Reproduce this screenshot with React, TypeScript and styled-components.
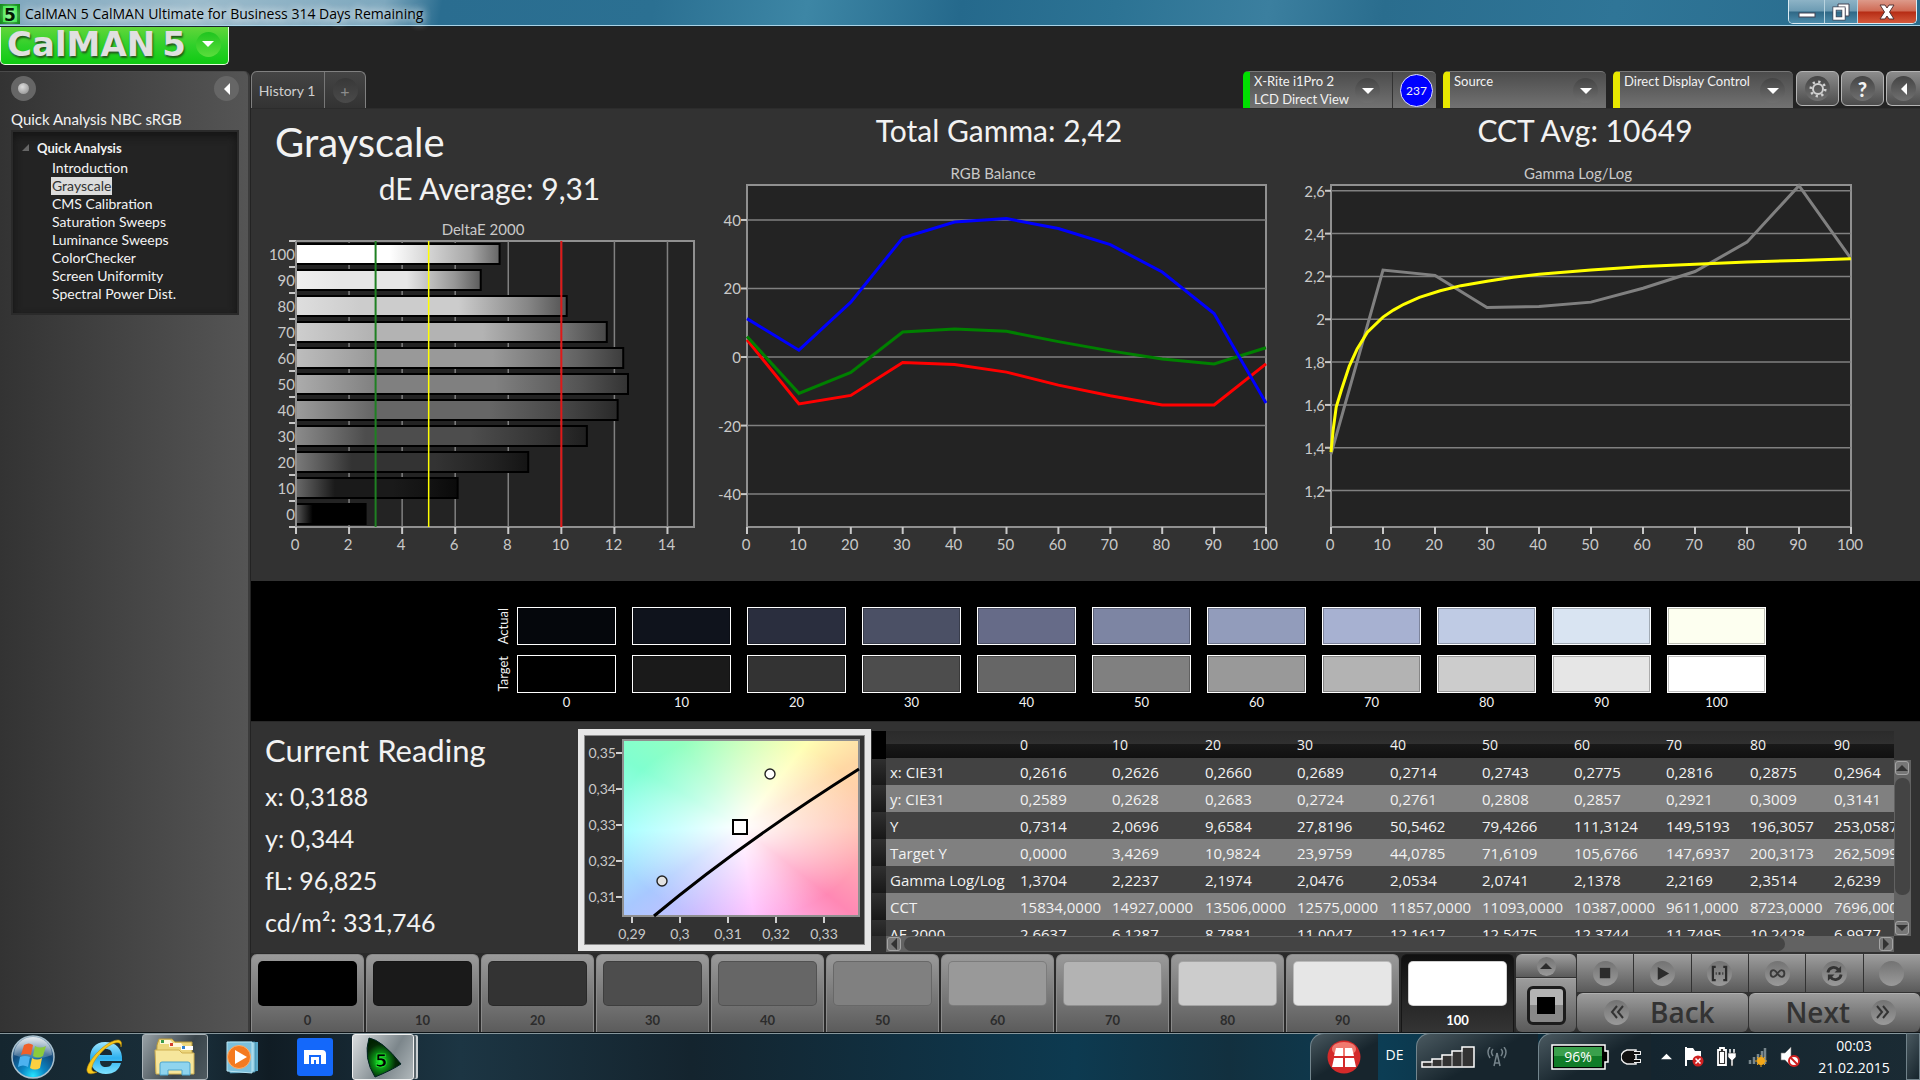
import React from "react";
import styled, { createGlobalStyle, css } from "styled-components";

const UI = `Lato, "Liberation Sans", sans-serif`;
const SEGOE = `"Open Sans", "Noto Sans", sans-serif`;

const GlobalStyle = createGlobalStyle`
  *, *::before, *::after { box-sizing: border-box; }
  body { margin: 0; background: #232323; font-family: ${UI}; color: #f2f2f2; }
  button { font: inherit; color: inherit; border: 0; padding: 0; margin: 0; background: none; cursor: pointer; }
  h1, h2, h3, p, ul { margin: 0; padding: 0; font-weight: 400; }
  svg { display: block; flex: none; }
`;

const Page = styled.div`
  min-height: 100vh;
  display: flex;
  flex-direction: column;
  overflow: hidden;
`;

/* ---------- window title bar ---------- */

const TitleBar = styled.header`
  display: flex;
  justify-content: space-between;
  align-items: flex-start;
  height: 27px;
  flex: none;
  border-bottom: 1px solid #16232b;
  box-shadow: inset 0 -1px 0 #a9d3e6;
  background: linear-gradient(100deg, #7fa6bd 0, #9dbccc 10%, #7ea8be 20%, #2a6d90 23%, #2b7092 34%, #3d86a5 42%, #25698c 50%, #2c7394 58%, #3b7f9f 66%, #2a6d8e 72%, #2f7597 84%, #286b8c 100%);
`;

const TitleText = styled.div`
  display: flex;
  align-items: center;
  gap: 5px;
  height: 27px;
  font: 14px/20px ${SEGOE};
  color: #000;
  white-space: nowrap;
  text-shadow: 0 0 8px #fff, 0 0 10px #ffffffaa;
`;

const WindowControls = styled.div`
  display: flex;
  height: 24px;
  margin-right: 3px;
  border: 1px solid #dcebf2;
  border-top: 0;
  border-radius: 0 0 5px 5px;
  overflow: hidden;
`;

const WindowButton = styled.button<{ $width: number; $close?: boolean }>`
  width: ${(p) => p.$width}px;
  display: grid;
  place-items: center;
  border-right: 1px solid #b8d3df;
  background: linear-gradient(#8db3c6, #6c9bb3 48%, #2f6886 52%, #4c8cab);
  &:last-child { border-right: 0; }
  ${(p) => p.$close && css`background: linear-gradient(#dd9a8a, #cf6a54 48%, #b62c14 52%, #d4593c);`}
`;

/* ---------- application shell ---------- */

const Brand = styled.div`
  height: 44px;
  flex: none;
  display: flex;
  align-items: flex-start;
`;

const BrandButton = styled.button`
  display: flex;
  align-items: center;
  gap: 10px;
  height: 38px;
  width: 229px;
  padding: 0 0 3px 6px;
  border: 1px solid #e8ffe0;
  border-top: 0;
  border-radius: 0 0 5px 5px;
  background: linear-gradient(#62d63a, #2fd02a 50%, #0fcb12);
`;

const BrandName = styled.span`
  display: flex;
  gap: 7px;
  font: bold 34px/32px "DejaVu Sans", sans-serif;
  color: #e0e0e0;
  text-shadow: 1px 2px 2px #1c5a14, 0 1px 0 #999;
`;

const Round = styled.span<{ $size?: number; $tone?: string }>`
  display: grid;
  place-items: center;
  flex: none;
  width: ${(p) => p.$size ?? 25}px;
  height: ${(p) => p.$size ?? 25}px;
  border-radius: 50%;
  background: ${(p) => p.$tone ?? "linear-gradient(#444, #707070)"};
`;

const Body = styled.div`
  flex: 1;
  display: flex;
  min-height: 0;
`;

const Sidebar = styled.aside`
  width: 250px;
  flex: none;
  padding: 4px 9px 4px 11px;
  border-top: 1px solid #4a4a4a;
  border-right: 2px solid #3c3c3c;
  border-radius: 0 6px 0 0;
  background: linear-gradient(90deg, #333, #555);
`;

const SidebarTools = styled.div`
  display: flex;
  justify-content: space-between;
  height: 25px;
`;

const WorkflowName = styled.h2`
  margin-top: 7px;
  font-size: 15px;
  line-height: 22px;
`;

const Tree = styled.nav`
  padding: 6px 9px 6px;
  height: 185px;
  border: 2px solid #2a2a2a;
  background: #232323;
  box-shadow: inset 0 4px 8px #141414;
  font-size: 14px;
`;

const TreeRoot = styled.div`
  display: flex;
  align-items: center;
  gap: 8px;
  height: 19px;
  font-size: 13px;
  font-weight: 700;
`;

const TreeList = styled.ul`
  list-style: none;
  padding: 2px 0 0 29px;
`;

const TreeItem = styled.li`
  height: 18px;
  line-height: 18px;
`;

const TreeLink = styled.a<{ $active?: boolean }>`
  display: inline-block;
  padding: 0 1px;
  color: ${(p) => (p.$active ? "#333" : "#f4f4f4")};
  background: ${(p) => (p.$active ? "#dcdcdc" : "transparent")};
  text-decoration: none;
`;

const Main = styled.main`
  flex: 1;
  min-width: 0;
  display: flex;
  flex-direction: column;
  padding-left: 1px;
`;

const TopRow = styled.div`
  display: flex;
  justify-content: space-between;
  height: 37px;
`;

const Tabs = styled.div`
  display: flex;
  border: 1px solid #808080;
  border-bottom: 0;
  border-radius: 6px 6px 0 0;
  background: linear-gradient(#454545, #333);
`;

const Tab = styled.button`
  width: 73px;
  padding-right: 2px;
  border-right: 1px solid #777;
  font-size: 14px;
  color: #cfcfcf;
`;

const AddTab = styled.button`
  width: 40px;
  display: grid;
  place-items: center;
  font-size: 16px;
  color: #8c8c8c;
`;

const Devices = styled.div`
  display: flex;
  gap: 7px;
`;

const Device = styled.div<{ $width: number; $accent: string }>`
  display: flex;
  width: ${(p) => p.$width}px;
  border-left: 7px solid ${(p) => p.$accent};
  border-top: 1px solid #777;
  border-radius: 5px 5px 0 0;
  background: linear-gradient(#4c4c4c, #727272);
`;

const DeviceButton = styled.button<{ $meter?: boolean }>`
  flex: 1;
  display: flex;
  justify-content: space-between;
  align-items: flex-start;
  padding: 0 ${(p) => (p.$meter ? 12 : 8)}px 0 4px;
  font-size: 13px;
  line-height: 18px;
  text-align: left;
  white-space: nowrap;
  ${Round} { margin-top: 6px; }
`;

const Badge = styled.div`
  width: 44px;
  display: grid;
  place-items: center;
  border-left: 1px solid #333;
  padding-left: 4px;
  span {
    display: grid;
    place-items: center;
    width: 33px;
    height: 33px;
    border: 1px solid #dfe0ff;
    border-radius: 50%;
    background: #0000ff;
    font-size: 12px;
  }
`;

const ToolGroup = styled.div`
  display: flex;
  gap: 2px;
  margin-left: -4px;
`;

const ToolButton = styled.button<{ $edge?: boolean }>`
  width: ${(p) => (p.$edge ? 34 : 43)}px;
  height: 35px;
  display: grid;
  place-items: center;
  border: 1px solid #b4b4b4;
  border-right-width: ${(p) => (p.$edge ? 0 : 1)}px;
  border-radius: ${(p) => (p.$edge ? "6px 0 0 6px" : "6px")};
  background: linear-gradient(#8c8c8c, #4c4c4c);
  font-size: 20px;
  font-weight: 900;
`;

/* ---------- charts ---------- */

const Charts = styled.section`
  flex: 1;
  display: grid;
  grid-template-columns: 453fr 558fr 582fr;
  column-gap: 16px;
  align-items: start;
  padding: 3px 44px 0 0;
  border-top: 1px solid #2c2c2c;
  background: #323232;
`;

const ChartColumn = styled.div`
  min-width: 0;
`;

const PageTitle = styled.h1`
  padding: 6px 0 0 24px;
  font-size: 40px;
  line-height: 48px;
`;

const Stat = styled.h2<{ $indent?: boolean }>`
  text-align: center;
  font-size: 30px;
  line-height: ${(p) => (p.$indent ? 44 : 36)}px;
  padding-left: ${(p) => (p.$indent ? 24 : 0)}px;
  margin-bottom: ${(p) => (p.$indent ? 5 : 12)}px;
`;

const ChartSvg = styled.svg`
  width: 100%;
  height: auto;
  overflow: visible;
  font: 15px ${UI};
  text { fill: #c9c9c9; }
  .grid { stroke: #808080; stroke-width: 1.5; }
  .tick { stroke: #c8c8c8; stroke-width: 2; }
`;

const grays = ["#000000", "#1a1a1a", "#333333", "#4d4d4d", "#666666", "#808080", "#999999", "#b3b3b3", "#cccccc", "#e6e6e6", "#ffffff"];
const levels = [0, 10, 20, 30, 40, 50, 60, 70, 80, 90, 100];
const deltaE = [2.66, 6.13, 8.79, 11.0, 12.16, 12.55, 12.37, 11.75, 10.24, 7.0, 7.71];

function DeltaChart() {
  const left = 45, right = 443, top = 26, bottom = 312, step = 26;
  const x = (v: number) => left + (v * (right - left)) / 15;
  return (
    <ChartSvg viewBox="0 0 453 345" role="img" aria-label="DeltaE 2000">
      <defs>
        {grays.map((_, i) => {
          const c = Math.round(i * 25.5);
          const light = Math.round(c + (255 - c) * 0.35);
          const dark = Math.round(c * 0.4);
          const g = (n: number) => `rgb(${n},${n},${n})`;
          return (
            <linearGradient id={`bar${i}`} key={i}>
              <stop offset="0" stopColor={g(light)} />
              <stop offset="0.24" stopColor={g(c)} />
              <stop offset={i === 10 ? 0.46 : 0.6} stopColor={g(c)} />
              <stop offset="0.86" stopColor={g(Math.round(c * 0.65))} />
              <stop offset="1" stopColor={g(dark)} />
            </linearGradient>
          );
        })}
      </defs>
      <text x="232" y="20" textAnchor="middle">DeltaE 2000</text>
      <rect x={left} y={top} width={right - left} height={bottom - top} fill="#232323" stroke="#909090" strokeWidth="2" />
      {[2, 4, 6, 8, 10, 12, 14].map((v) => <line key={v} className="grid" x1={x(v)} x2={x(v)} y1={top} y2={bottom} />)}
      {[0, 2, 4, 6, 8, 10, 12, 14].map((v) => (
        <g key={v}>
          <line className="tick" x1={x(v)} x2={x(v)} y1={bottom} y2={bottom + 7} />
          <text x={x(v) - 1} y="335" textAnchor="middle">{v}</text>
        </g>
      ))}
      {levels.map((l, i) => {
        const y = top + (10 - i) * step;
        return (
          <g key={l}>
            <line className="tick" x1={left - 7} x2={left} y1={y} y2={y} />
            <text x={left - 1} y={y + 19} textAnchor="end">{l}</text>
            <rect x={left} y={y + 3} width={x(deltaE[i]) - left - 1} height="20" fill={`url(#bar${i})`} stroke="#000" strokeWidth="2" />
          </g>
        );
      })}
      <line className="tick" x1={left - 7} x2={left} y1={bottom} y2={bottom} />
      <line x1={left} x2={left} y1={top} y2={bottom} stroke="#909090" strokeWidth="2" />
      <line x1={x(3)} x2={x(3)} y1={top} y2={bottom} stroke="#1f8022" strokeWidth="2" />
      <line x1={x(5)} x2={x(5)} y1={top} y2={bottom} stroke="#ffff00" strokeWidth="1.5" />
      <line x1={x(10)} x2={x(10)} y1={top} y2={bottom} stroke="#e01818" strokeWidth="2" />
    </ChartSvg>
  );
}

type Series = { color: string; points: [number, number][] };

function LineChart(p: { width: number; title: string; titleX: number; left: number; right: number; min: number; max: number; ticks: number[]; series: Series[] }) {
  const top = 25, bottom = 367;
  const x = (v: number) => p.left + (v * (p.right - p.left)) / 100;
  const y = (v: number) => bottom - ((v - p.min) * (bottom - top)) / (p.max - p.min);
  return (
    <ChartSvg viewBox={`0 0 ${p.width} 400`} role="img" aria-label={p.title}>
      <text x={p.titleX} y="19" textAnchor="middle">{p.title}</text>
      <rect x={p.left} y={top} width={p.right - p.left} height={bottom - top} fill="#232323" stroke="#909090" strokeWidth="2" />
      {p.ticks.map((t) => (
        <g key={t}>
          <line className="grid" x1={p.left} x2={p.right} y1={y(t)} y2={y(t)} />
          <line className="tick" x1={p.left - 6} x2={p.left} y1={y(t)} y2={y(t)} />
          <text x={p.left - 6} y={y(t) + 6} textAnchor="end">{String(t).replace(".", ",")}</text>
        </g>
      ))}
      {levels.map((l) => (
        <g key={l}>
          <line className="tick" x1={x(l)} x2={x(l)} y1={bottom} y2={bottom + 7} />
          <text x={x(l) - 1} y="390" textAnchor="middle">{l}</text>
        </g>
      ))}
      {p.series.map((s) => (
        <polyline key={s.color} fill="none" stroke={s.color} strokeWidth="3" points={s.points.map(([a, b]) => `${x(a)},${y(b)}`).join(" ")} />
      ))}
    </ChartSvg>
  );
}

const byLevel = (values: number[]): [number, number][] => values.map((v, i) => [i * 10, v]);

const rgbSeries: Series[] = [
  { color: "#ff0000", points: byLevel([5, -13.7, -11.2, -1.6, -2.2, -4.4, -8.2, -11.3, -14, -14, -2]) },
  { color: "#008000", points: byLevel([6, -10.6, -4.5, 7.3, 8.2, 7.5, 4.5, 1.8, -0.6, -2, 2.7]) },
  { color: "#0000ff", points: byLevel([11.2, 2, 16, 34.8, 39.4, 40.4, 37.5, 32.8, 24.8, 12.7, -13.4]) },
];

const gammaSeries: Series[] = [
  { color: "#808080", points: byLevel([1.3704, 2.23, 2.205, 2.055, 2.06, 2.08, 2.145, 2.223, 2.36, 2.624, 2.283]) },
  {
    color: "#ffff00",
    points: [[0, 1.38], [0.4, 1.48], [1, 1.59], [2, 1.67], [3.5, 1.78], [5, 1.86], [7, 1.94], [10, 2.01], [12, 2.043], [14, 2.07], [17, 2.102], [21, 2.133], [25, 2.157], [30, 2.178], [35, 2.196], [40, 2.21], [50, 2.23], [60, 2.246], [70, 2.257], [80, 2.267], [90, 2.275], [100, 2.283]],
  },
];

/* ---------- swatches ---------- */

const SwatchBand = styled.section`
  display: grid;
  grid-template-columns: 258fr repeat(11, 115fr) 146fr;
  grid-template-rows: 38px 38px 20px;
  row-gap: 10px;
  padding: 26px 0 9px;
  height: 141px;
  background: #000;
  border-bottom: 1px solid #282828;
`;

const SwatchHead = styled.div`
  display: grid;
  place-items: center end;
  font-size: 13px;
  span { writing-mode: vertical-rl; transform: rotate(180deg); line-height: 12px; }
`;

const Swatch = styled.div<{ $color: string }>`
  margin: 0 8px 0 8px;
  border: 1px solid #fff;
  box-shadow: inset 0 0 0 1px #00000040;
  background: ${(p) => p.$color};
`;

const SwatchLabel = styled.div`
  margin-top: -11px;
  text-align: center;
  font-size: 13px;
  line-height: 20px;
`;

const actual = ["#05070c", "#0f131c", "#2a2e3e", "#4b5065", "#666b88", "#7d85a3", "#929cbb", "#a7b1d1", "#bfcbe4", "#d9e4f2", "#fdfff0"];

/* ---------- readings ---------- */

const ReadingRow = styled.section`
  display: flex;
  height: 231px;
  padding: 7px 9px 0 14px;
  background: #323232;
`;

const Readings = styled.div`
  width: 313px;
  flex: none;
  h2 { font-size: 31px; line-height: 42px; margin-bottom: 4px; }
  p { font-size: 25px; line-height: 42px; }
`;

const CieFrame = styled.div`
  width: 293px;
  height: 222px;
  flex: none;
  border: 6px solid #e6e6e6;
  outline: 1px solid #8c8c8c;
  outline-offset: -7px;
  padding: 1px;
`;

const CieSvg = styled.svg`
  width: 279px;
  height: 208px;
  font: 14px ${UI};
  text { fill: #c9c9c9; }
  .tick { stroke: #d0d0d0; stroke-width: 2; }
  background:
    radial-gradient(ellipse at 50% 50%, #fff 0%, #ffffff80 35%, #ffffff00 75%) 38px 3px / 236px 176px no-repeat,
    conic-gradient(from 0deg at 50% 50%, #c8ffb8 0deg, #ffffb4 38deg, #ffd8a4 60deg, #ffc4b4 90deg, #ff88b4 128deg, #ffa8e0 150deg, #ffc0ff 172deg, #d0bcff 205deg, #a8c8ff 235deg, #a4ffff 268deg, #80ffd0 300deg, #94ffc0 325deg, #c8ffb8 360deg) 38px 3px / 236px 176px no-repeat,
    #323232;
`;

function CieChart() {
  return (
    <CieSvg viewBox="0 0 279 208" role="img" aria-label="CIE chromaticity">
      <rect x="38" y="4" width="236" height="176" fill="none" stroke="#909090" strokeWidth="2" />
      {["0,35", "0,34", "0,33", "0,32", "0,31"].map((t, i) => (
        <g key={t}>
          <line className="tick" x1="31" x2="37" y1={17 + i * 36} y2={17 + i * 36} />
          <text x="31" y={22 + i * 36} textAnchor="end">{t}</text>
        </g>
      ))}
      {["0,29", "0,3", "0,31", "0,32", "0,33"].map((t, i) => (
        <g key={t}>
          <line className="tick" x1={47 + i * 48} x2={47 + i * 48} y1="181" y2="187" />
          <text x={47 + i * 48} y="203" textAnchor="middle">{t}</text>
        </g>
      ))}
      <path d="M69 180 Q155 108 274 33" fill="none" stroke="#000" strokeWidth="3" />
      <rect x="148" y="84" width="14" height="14" fill="#fff" stroke="#000" strokeWidth="2" />
      <circle cx="185" cy="38" r="5" fill="#fff" stroke="#222" strokeWidth="1.4" />
      <circle cx="77" cy="145" r="5" fill="#e2e2e2" stroke="#222" strokeWidth="1.4" />
    </CieSvg>
  );
}

const DataPanel = styled.div`
  flex: 1;
  min-width: 0;
  display: grid;
  grid-template-columns: 14px minmax(0, 1fr) 17px;
  grid-template-rows: 29px 176px 16px;
  margin-top: 2px;
  margin-left: 1px;
`;

const RowSelectors = styled.div`
  grid-row: 1 / 3;
  background: linear-gradient(#000 0 28px, transparent 28px), repeating-linear-gradient(#303030 0, #181818 27px) 0 27px;
`;

const TableViewport = styled.div`
  grid-column: 2;
  grid-row: 1 / 3;
  overflow: hidden;
`;

const DataTable = styled.table`
  table-layout: fixed;
  width: 1020px;
  border-collapse: collapse;
  font: 15px/20px ${SEGOE};
  white-space: nowrap;
  th, td { padding: 0 0 0 4px; text-align: left; font-weight: 400; height: 27px; }
  thead th { font-size: 14px; padding-top: 1px; }
  thead tr { background: linear-gradient(#2b2b2b 0, #303030 48%, #191919 50%, #101010); }
  tbody tr { background: #424242; }
  tbody tr:nth-child(even) { background: #808080; }
`;

const ScrollTrack = styled.div<{ $vertical?: boolean }>`
  grid-column: ${(p) => (p.$vertical ? 3 : 2)};
  grid-row: ${(p) => (p.$vertical ? 2 : 3)};
  display: flex;
  flex-direction: ${(p) => (p.$vertical ? "column" : "row")};
  gap: 3px;
  padding: 1px;
  background: #626262;
`;

const ScrollArrow = styled.button`
  width: 14px;
  height: 14px;
  flex: none;
  display: grid;
  place-items: center;
  border: 1px solid #a4a4a4;
  border-radius: 3px;
  background: #777;
`;

const ScrollThumb = styled.div<{ $grow: number }>`
  flex: ${(p) => p.$grow};
  border-radius: 7px;
  background: #444;
`;

const ScrollRest = styled.div<{ $grow: number }>`
  flex: ${(p) => p.$grow};
`;

const columnWidths = [130, 92, 93, 92, 93, 92, 92, 92, 84, 84, 76];
const tableRows: [string, string[]][] = [
  ["x: CIE31", ["0,2616", "0,2626", "0,2660", "0,2689", "0,2714", "0,2743", "0,2775", "0,2816", "0,2875", "0,2964"]],
  ["y: CIE31", ["0,2589", "0,2628", "0,2683", "0,2724", "0,2761", "0,2808", "0,2857", "0,2921", "0,3009", "0,3141"]],
  ["Y", ["0,7314", "2,0696", "9,6584", "27,8196", "50,5462", "79,4266", "111,3124", "149,5193", "196,3057", "253,0587"]],
  ["Target Y", ["0,0000", "3,4269", "10,9824", "23,9759", "44,0785", "71,6109", "105,6766", "147,6937", "200,3173", "262,5099"]],
  ["Gamma Log/Log", ["1,3704", "2,2237", "2,1974", "2,0476", "2,0534", "2,0741", "2,1378", "2,2169", "2,3514", "2,6239"]],
  ["CCT", ["15834,0000", "14927,0000", "13506,0000", "12575,0000", "11857,0000", "11093,0000", "10387,0000", "9611,0000", "8723,0000", "7696,0000"]],
  ["ΔE 2000", ["2,6637", "6,1287", "8,7881", "11,0047", "12,1617", "12,5475", "12,3744", "11,7495", "10,2428", "6,9977"]],
];

/* ---------- pattern bar ---------- */

const PatternBar = styled.section`
  display: flex;
  height: 79px;
  background: #323232;
`;

const Patterns = styled.div`
  flex: 1;
  display: grid;
  grid-template-columns: repeat(11, 1fr);
  background: #2a2a2a;
`;

const Pattern = styled.button<{ $selected?: boolean }>`
  display: flex;
  flex-direction: column;
  margin: 1px 2px 0 0;
  padding: 6px;
  border: 1px solid ${(p) => (p.$selected ? "#161616" : "#8a8a8a")};
  border-bottom-color: #4a4a4a;
  border-radius: 6px;
  background: ${(p) => (p.$selected ? "linear-gradient(#101010, #383838)" : "linear-gradient(#9a9a9a, #555)")};
  font-size: 13px;
  font-weight: 700;
  line-height: 28px;
  color: ${(p) => (p.$selected ? "#fff" : "#2c2c2c")};
`;

const PatternColor = styled.span<{ $color: string }>`
  align-self: stretch;
  height: 45px;
  flex: none;
  border-radius: 5px;
  border: 1px solid #00000030;
  background: ${(p) => p.$color};
`;

const PatternLabel = styled.span`
  align-self: center;
`;

const metal = "linear-gradient(#9c9c9c, #5a5a5a)";

const WindowSize = styled.div`
  width: 60px;
  margin-top: 1px;
  display: grid;
  grid-template-rows: 23px 1fr;
  row-gap: 1px;
  border-radius: 6px;
  overflow: hidden;
`;

const MetalButton = styled.button`
  display: grid;
  place-items: center;
  border-top: 1px solid #a8a8a8;
  background: ${metal};
`;

const SizeBox = styled.span`
  display: grid;
  place-items: center;
  width: 39px;
  height: 39px;
  border: 3px solid #1c1c1c;
  border-radius: 6px;
  background: linear-gradient(#b4b4b4 50%, #888 50%);
  &::after { content: ""; width: 18px; height: 17px; background: #000; }
`;

const Transport = styled.div`
  width: 343px;
  margin: 1px 0 0 1px;
  display: grid;
  grid-template-columns: repeat(6, 1fr);
  grid-template-rows: 38px 39px;
  gap: 1px;
`;

const NavButton = styled.button<{ $forward?: boolean }>`
  grid-column: span 3;
  display: flex;
  align-items: center;
  justify-content: ${(p) => (p.$forward ? "flex-end" : "flex-start")};
  gap: 21px;
  padding: 0 ${(p) => (p.$forward ? 24 : 27)}px 2px;
  border-top: 1px solid #b0b0b0;
  border-radius: 6px;
  background: ${metal};
  font: 600 28px/36px ${SEGOE};
  color: #333;
`;

const knob = "linear-gradient(#737373, #9a9a9a)";

/* ---------- taskbar ---------- */

const Taskbar = styled.footer`
  display: flex;
  justify-content: space-between;
  flex: none;
  height: 48px;
  border-top: 1px solid #0d1316;
  box-shadow: inset 0 1px 0 #87979d;
  background: linear-gradient(90deg, #15262f 0, #1a2f3b 10%, #101c24 14%, #1c3543 24%, #14242e 36%, #0f3346 50%, #0d3a50 56%, #12303f 64%, #0c3d54 72%, #0b2c3c 80%, #14252f 86%, #1b2b34 100%);
  font: 14px/22px ${SEGOE};
  color: #fff;
`;

const TaskGroup = styled.div`
  display: flex;
  align-items: center;
`;

const TaskButton = styled.button<{ $width: number; $state?: "open" | "active" }>`
  width: ${(p) => p.$width}px;
  height: 46px;
  display: grid;
  place-items: center;
  border: 1px solid transparent;
  border-radius: 3px;
  ${(p) => p.$state === "open" && css`border-color: #aab3b8; background: linear-gradient(120deg, #98a1a6, #39444a 60%, #4e5a60);`}
  ${(p) => p.$state === "active" && css`border-color: #f0f0f0; background: linear-gradient(120deg, #d8dcde, #7c868b 60%, #b0b8bb); box-shadow: 3px 0 0 -1px #5a666c, 5px 0 0 -1px #c8ced1;`}
`;

const TrayGroup = styled.div<{ $width: number; $pad: number }>`
  width: ${(p) => p.$width}px;
  height: 47px;
  display: flex;
  align-items: center;
  gap: 12px;
  padding-left: ${(p) => p.$pad}px;
  border-left: 1px solid #73858d;
  border-top: 1px solid #73858d;
  border-radius: 14px 0 0 0;
  background: linear-gradient(150deg, #4a5960, #17252d 55%);
`;

const Language = styled.button`
  width: 38px;
  padding: 0 5px 4px 0;
`;

const TrayIcons = styled.div`
  display: flex;
  align-items: center;
  gap: 12px;
  padding: 0 2px 0 10px;
`;

const Clock = styled.time`
  width: 104px;
  text-align: center;
`;

const ShowDesktop = styled.button`
  width: 14px;
  height: 47px;
  border: 1px solid #71828a;
  background: linear-gradient(120deg, #4a5960, #16242c);
`;

function Arrow({ dir, size = 12, color = "#fff" }: { dir: "up" | "down" | "left" | "right"; size?: number; color?: string }) {
  const d = { up: "M0 9L6 3L12 9Z", down: "M0 3L6 9L12 3Z", left: "M9 0L3 6L9 12Z", right: "M3 0L9 6L3 12Z" }[dir];
  return <svg width={size} height={size} viewBox="0 0 12 12"><path d={d} fill={color} /></svg>;
}

function StartOrb() {
  return (
    <svg width="44" height="44" viewBox="0 0 44 44">
      <defs>
        <radialGradient id="orb" cx=".5" cy=".95" r=".95"><stop offset="0" stopColor="#25e4ff" /><stop offset=".3" stopColor="#0a86c4" /><stop offset=".65" stopColor="#124a7c" /><stop offset="1" stopColor="#7e9cb4" /></radialGradient>
        <linearGradient id="gloss" x2="0" y2="1"><stop offset="0" stopColor="#fff" stopOpacity=".8" /><stop offset="1" stopColor="#fff" stopOpacity=".15" /></linearGradient>
      </defs>
      <circle cx="22" cy="22" r="21" fill="url(#orb)" stroke="#a8c0ce" strokeWidth="1.5" />
      <path d="M3 20a19 18 0 0 1 38 0q-18 7-38 0z" fill="url(#gloss)" />
      <path d="M13 10q5-3 9 0l-2 10q-5-2-10 0z" fill="#f0602a" />
      <path d="M24 11q5 3 11 0l-3 10q-5 3-10 0z" fill="#8ccb3c" />
      <path d="M9 22q5-2 10 0l-2 10q-5-3-10 0z" fill="#4cb2f0" />
      <path d="M21 23q5 3 10 0l-2 10q-5 3-10 0z" fill="#fcd040" />
    </svg>
  );
}

function ExplorerE() {
  return (
    <svg width="38" height="38" viewBox="0 0 38 38">
      <defs><linearGradient id="ie" x2="0" y2="1"><stop offset="0" stopColor="#9fe6ff" /><stop offset=".5" stopColor="#2cb0ee" /><stop offset="1" stopColor="#7fe2ff" /></linearGradient></defs>
      <path d="M20 4C10 4 5 11 5 20s6 16 16 16c8 0 13-4 15-11h-9c-1 3-3 4-6 4-4 0-6-2-6-6h22C38 11 31 4 20 4zm-5 13c0-4 2-6 6-6s6 2 6 6z" fill="url(#ie)" />
      <path d="M36 9C38 2 34 0 26 4 14 10 1 26 2 33c1 4 6 3 10 1-4 0-6-1-5-5C9 20 22 7 30 5c4-1 6 0 6 4z" fill="#f8c81c" stroke="#b88a08" strokeWidth=".6" />
    </svg>
  );
}

function FolderIcon() {
  return (
    <svg width="42" height="40" viewBox="0 0 42 40">
      <path d="M3 8l2-6h13l3 3h17v30H2z" fill="#ecd67c" stroke="#b89a3c" />
      <path d="M6 3h10l4 4H6zM15 6h12l3 4H15z" fill="#fff7d8" />
      <rect x="7" y="3" width="3" height="3" fill="#3a9c4a" /><rect x="16" y="6" width="3" height="3" fill="#d4402c" />
      <rect x="27" y="9" width="12" height="4" fill="#fff" /><rect x="28" y="9" width="3" height="3" fill="#3080d0" />
      <path d="M1 13h24l3 3h12v21H2z" fill="#f6e69c" stroke="#d0b050" />
      <path d="M6 38V27q0-2 2-2h26q2 0 2 2v11h-8v-5H14v5z" fill="#8fd4ee" stroke="#4da4cc" />
    </svg>
  );
}

function PlayerIcon() {
  return (
    <svg width="36" height="34" viewBox="0 0 36 34">
      <path d="M8 2h25v29l-25 2z" fill="#5aa8c8" /><path d="M5 2h25v30l-25 1z" fill="#9cd4e8" stroke="#3a88a8" strokeWidth=".8" />
      <path d="M2 2h25v31L2 31z" fill="#7cc0dc" stroke="#b8e4f2" />
      <circle cx="14" cy="17" r="11.500" fill="#f47a20" stroke="#fbb070" /><path d="M10 10l12 7-12 7z" fill="#fff" />
    </svg>
  );
}

function MaxthonIcon() {
  return (
    <svg width="36" height="38" viewBox="0 0 36 38">
      <rect width="36" height="38" rx="3" fill="#1468fa" />
      <path d="M7 12h18q4 0 4 4v10h-5v-9H12v9H7z" fill="#fff" />
      <path d="M14 19h8v7h-3v-4h-2v4h-3z" fill="#fff" />
    </svg>
  );
}

function CalmanIcon() {
  return (
    <svg width="38" height="42" viewBox="0 0 38 42">
      <defs><radialGradient id="cal" cx=".4" cy=".6" r=".55"><stop offset="0" stopColor="#20ff30" /><stop offset=".4" stopColor="#0a8a14" /><stop offset=".8" stopColor="#042a06" /><stop offset="1" stopColor="#020" /></radialGradient></defs>
      <path d="M5 2Q18 4 37 28Q28 34 11 41Q-1 22 5 2z" fill="url(#cal)" stroke="#022" />
      <text x="11" y="31" fontFamily="DejaVu Sans" fontWeight="bold" fontSize="18" stroke="#2cff3c" strokeWidth=".6" fill="#000">5</text>
    </svg>
  );
}

function DoubleChevron({ right }: { right?: boolean }) {
  return (
    <svg width="14" height="14" viewBox="0 0 14 14" fill="none" stroke="#333" strokeWidth="2">
      <path d={right ? "M1 1l5 6-5 6M7 1l5 6-5 6" : "M7 1L2 7l5 6M13 1L8 7l5 6"} />
    </svg>
  );
}

const transportIcons: [string, React.ReactNode][] = [
  ["Stop", <rect x="3" y="3" width="11" height="11" fill="#2c2c2c" />],
  ["Play", <path d="M4 2l12 7-12 7z" fill="#2c2c2c" />],
  ["Read range", <path d="M5 2H2v14h3M13 2h3v14h-3M5 9h1M8 9h2M12 9h1" fill="none" stroke="#2c2c2c" strokeWidth="2.400" />],
  ["Continuous", <path d="M9 9C7 6 6 5 4 5.500 1 6 1 12 4 12.500 6 13 7 12 9 9s3-4 5-3.500c3 .5 3 6.500 0 7C12 13 11 12 9 9z" fill="none" stroke="#3a3a3a" strokeWidth="2" />],
  ["Refresh", <><path d="M2 8C3 2 10 1 13 5M16 10c-1 6-8 7-11 3" fill="none" stroke="#333" strokeWidth="3" /><path d="M16 1v7H9zM2 17v-7h7z" fill="#333" /></>],
  ["Blank", null],
];

export default function App() {
  return (
    <Page>
      <GlobalStyle />
      <TitleBar>
        <TitleText>
          <svg width="20" height="20" viewBox="0 0 20 20">
            <rect width="20" height="20" fill="#0a8a12" /><rect x="3" y="2" width="14" height="16" fill="#20e830" />
            <text x="4" y="17" fontFamily="DejaVu Sans" fontWeight="bold" fontSize="17" fill="#021a04">5</text>
          </svg>
          CalMAN 5 CalMAN Ultimate for Business 314 Days Remaining
        </TitleText>
        <WindowControls>
          <WindowButton $width={36} aria-label="Minimize"><svg width="18" height="16"><rect x="1" y="9" width="16" height="4" fill="#fff" stroke="#445" /></svg></WindowButton>
          <WindowButton $width={33} aria-label="Restore">
            <svg width="18" height="18" fill="none"><path d="M6 1h11v12h-4V5H6z" fill="#fff" stroke="#445" /><rect x="2.500" y="5.500" width="9" height="10" stroke="#445" strokeWidth="4" /><rect x="2.500" y="5.500" width="9" height="10" stroke="#fff" strokeWidth="2.500" /></svg>
          </WindowButton>
          <WindowButton $width={58} $close aria-label="Close">
            <svg width="18" height="16" viewBox="0 0 18 16"><path d="M2 1h5l2 3 2-3h5l-4.500 7 4.500 7h-5l-2-3-2 3H2l4.500-7z" fill="#fff" stroke="#533" /></svg>
          </WindowButton>
        </WindowControls>
      </TitleBar>

      <Brand>
        <BrandButton aria-label="CalMAN menu">
          <BrandName><span>CalMAN</span><span>5</span></BrandName>
          <Round $tone="linear-gradient(#1fc41f, #5ade3c)"><Arrow dir="down" /></Round>
        </BrandButton>
      </Brand>

      <Body>
        <Sidebar>
          <SidebarTools>
            <button aria-label="Record"><Round $tone="#666"><Round $size={11} $tone="radial-gradient(circle at 40% 35%, #ddd, #888)" /></Round></button>
            <button aria-label="Collapse panel"><Round $tone="#666"><Arrow dir="left" /></Round></button>
          </SidebarTools>
          <WorkflowName>Quick Analysis NBC sRGB</WorkflowName>
          <Tree aria-label="Workflow">
            <TreeRoot>
              <svg width="7" height="7"><path d="M7 0v7H0z" fill="#666" /></svg>
              Quick Analysis
            </TreeRoot>
            <TreeList>
              {["Introduction", "Grayscale", "CMS Calibration", "Saturation Sweeps", "Luminance Sweeps", "ColorChecker", "Screen Uniformity", "Spectral Power Dist."].map((t) => (
                <TreeItem key={t}><TreeLink href="#" $active={t === "Grayscale"}>{t}</TreeLink></TreeItem>
              ))}
            </TreeList>
          </Tree>
        </Sidebar>

        <Main>
          <TopRow>
            <Tabs>
              <Tab>History 1</Tab>
              <AddTab aria-label="Add history"><Round $tone="linear-gradient(#383838, #4a4a4a)">+</Round></AddTab>
            </Tabs>
            <Devices>
              <Device $width={193} $accent="#00e000">
                <DeviceButton $meter>
                  <span>X-Rite i1Pro 2<br />LCD Direct View</span>
                  <Round><Arrow dir="down" /></Round>
                </DeviceButton>
                <Badge><span>237</span></Badge>
              </Device>
              <Device $width={163} $accent="#e8e800">
                <DeviceButton>Source<Round><Arrow dir="down" /></Round></DeviceButton>
              </Device>
              <Device $width={180} $accent="#e8e800">
                <DeviceButton>Direct Display Control<Round><Arrow dir="down" /></Round></DeviceButton>
              </Device>
              <ToolGroup>
                <ToolButton aria-label="Settings">
                  <Round>
                    <svg width="18" height="18" viewBox="0 0 18 18" fill="none" stroke="#d0d0d0">
                      <circle cx="9" cy="9" r="5" strokeWidth="2" /><circle cx="9" cy="9" r="7.300" strokeWidth="2.500" strokeDasharray="2.300 3.430" />
                    </svg>
                  </Round>
                </ToolButton>
                <ToolButton aria-label="Help"><Round>?</Round></ToolButton>
                <ToolButton $edge aria-label="Collapse"><Round><Arrow dir="left" /></Round></ToolButton>
              </ToolGroup>
            </Devices>
          </TopRow>

          <Charts>
            <ChartColumn>
              <PageTitle>Grayscale</PageTitle>
              <Stat $indent>dE Average: 9,31</Stat>
              <DeltaChart />
            </ChartColumn>
            <ChartColumn>
              <Stat>Total Gamma: 2,42</Stat>
              <LineChart width={558} title="RGB Balance" titleX={273} left={27} right={546} min={-49.6} max={50.2} ticks={[-40, -20, 0, 20, 40]} series={rgbSeries} />
            </ChartColumn>
            <ChartColumn>
              <Stat>CCT Avg: 10649</Stat>
              <LineChart width={582} title="Gamma Log/Log" titleX={284} left={37} right={557} min={1.03} max={2.627} ticks={[1.2, 1.4, 1.6, 1.8, 2, 2.2, 2.4, 2.6]} series={gammaSeries} />
            </ChartColumn>
          </Charts>

          <SwatchBand>
            <SwatchHead><span>Actual</span></SwatchHead>
            {actual.map((c) => <Swatch key={c} $color={c} />)}
            <div />
            <SwatchHead><span>Target</span></SwatchHead>
            {grays.map((c) => <Swatch key={c} $color={c} />)}
            <div />
            <div />
            {levels.map((l) => <SwatchLabel key={l}>{l}</SwatchLabel>)}
          </SwatchBand>

          <ReadingRow>
            <Readings>
              <h2>Current Reading</h2>
              <p>x: 0,3188</p>
              <p>y: 0,344</p>
              <p>fL: 96,825</p>
              <p>cd/m²: 331,746</p>
            </Readings>
            <CieFrame><CieChart /></CieFrame>
            <DataPanel>
              <RowSelectors />
              <TableViewport>
                <DataTable>
                  <colgroup>{columnWidths.map((w, i) => <col key={i} width={w} />)}</colgroup>
                  <thead>
                    <tr><th aria-label="Measure" />{levels.slice(0, 10).map((l) => <th key={l} scope="col">{l}</th>)}</tr>
                  </thead>
                  <tbody>
                    {tableRows.map(([name, cells]) => (
                      <tr key={name}><th scope="row">{name}</th>{cells.map((c, i) => <td key={i}>{c}</td>)}</tr>
                    ))}
                  </tbody>
                </DataTable>
              </TableViewport>
              <ScrollTrack $vertical>
                <ScrollArrow aria-label="Scroll up"><Arrow dir="up" color="#333" /></ScrollArrow>
                <ScrollThumb $grow={120} />
                <ScrollRest $grow={20} />
                <ScrollArrow aria-label="Scroll down"><Arrow dir="down" color="#333" /></ScrollArrow>
              </ScrollTrack>
              <ScrollTrack>
                <ScrollArrow aria-label="Scroll left"><Arrow dir="left" color="#333" /></ScrollArrow>
                <ScrollThumb $grow={886} />
                <ScrollRest $grow={88} />
                <ScrollArrow aria-label="Scroll right"><Arrow dir="right" color="#333" /></ScrollArrow>
              </ScrollTrack>
            </DataPanel>
          </ReadingRow>

          <PatternBar>
            <Patterns>
              {levels.map((l, i) => (
                <Pattern key={l} $selected={l === 100}>
                  <PatternColor $color={grays[i]} />
                  <PatternLabel>{l}</PatternLabel>
                </Pattern>
              ))}
            </Patterns>
            <WindowSize>
              <MetalButton aria-label="Expand"><Round $size={19} $tone={knob}><Arrow dir="up" color="#2c2c2c" /></Round></MetalButton>
              <MetalButton aria-label="Window size"><SizeBox /></MetalButton>
            </WindowSize>
            <Transport>
              {transportIcons.map(([name, icon]) => (
                <MetalButton key={name} aria-label={name}>
                  <Round $tone={knob}><svg width="17" height="17" viewBox="0 0 18 18">{icon}</svg></Round>
                </MetalButton>
              ))}
              <NavButton><Round $tone={knob}><DoubleChevron /></Round>Back</NavButton>
              <NavButton $forward>Next<Round $tone={knob}><DoubleChevron right /></Round></NavButton>
            </Transport>
          </PatternBar>
        </Main>
      </Body>

      <Taskbar>
        <TaskGroup>
          <TaskButton $width={66} aria-label="Start"><StartOrb /></TaskButton>
          <TaskButton $width={76} aria-label="Internet Explorer"><ExplorerE /></TaskButton>
          <TaskButton $width={66} $state="open" aria-label="Explorer"><FolderIcon /></TaskButton>
          <TaskButton $width={70} aria-label="Media Player"><PlayerIcon /></TaskButton>
          <TaskButton $width={74} aria-label="Maxthon"><MaxthonIcon /></TaskButton>
          <TaskButton $width={62} $state="active" aria-label="CalMAN"><CalmanIcon /></TaskButton>
        </TaskGroup>
        <TaskGroup>
          <TrayGroup $width={68} $pad={16}>
            <svg width="34" height="34" viewBox="0 0 34 34">
              <circle cx="17" cy="17" r="16.500" fill="#d42a2a" /><ellipse cx="17" cy="9" rx="12" ry="7" fill="#f07a70" />
              <path d="M9 8h7v8H7zM18 8h7l2 8h-9zM7 18h9v9H5zM18 18h9l2 9H18z" fill="#fff" />
            </svg>
          </TrayGroup>
          <Language>DE</Language>
          <TrayGroup $width={122} $pad={4}>
            <svg width="54" height="22" viewBox="0 0 54 22"><path d="M1 21v-5h10v-3h10v-4h10V5h10V1h12v20z" fill="#333" stroke="#fff" strokeWidth="1.500" /><path d="M11 16v5M21 13v8M31 9v12M41 5v16" stroke="#ddd" /></svg>
            <svg width="20" height="20" viewBox="0 0 20 20" fill="none" stroke="#75838a" strokeWidth="1.500"><path d="M10 6l-3 13M10 6l3 13M8 16h4M6 2q-3 3 0 7M14 2q3 3 0 7M3 0q-4 5 0 11M17 0q4 5 0 11" /></svg>
          </TrayGroup>
          <TrayGroup $width={113} $pad={12}>
            <svg width="58" height="28" viewBox="0 0 58 26">
              <path d="M1 1h53v6h3v11h-3v7H1z" fill="#000" stroke="#fff" strokeWidth="1.500" /><rect x="3" y="3" width="48" height="20" fill="#107c28" /><rect x="3" y="3" width="48" height="9" fill="#3aa04c" />
              <text x="27" y="18" textAnchor="middle" fontFamily="Open Sans" fontSize="14" fill="#fff">96%</text>
            </svg>
            <svg width="21" height="16" viewBox="0 0 21 16"><path d="M6 1h9v14H6q-6-2-6-7t6-7z" fill="#111" stroke="#eee" strokeWidth="1.500" /><path d="M13 4h7M13 12h7" stroke="#eee" strokeWidth="4" /><path d="M13 4h6M13 12h6" stroke="#111" strokeWidth="2" /></svg>
          </TrayGroup>
          <TrayIcons>
            <Arrow dir="up" size={11} />
            <svg width="20" height="20" viewBox="0 0 20 20"><path d="M2 0v19" stroke="#fff" strokeWidth="2" /><path d="M3 1h6l2 3h6v9H3z" fill="#fff" /><circle cx="14" cy="14" r="5.500" fill="#d02020" /><path d="M11.500 11.500l5 5M16.500 11.500l-5 5" stroke="#fff" strokeWidth="1.500" /></svg>
            <svg width="20" height="20" viewBox="0 0 20 20"><path d="M2 3h2V1h4v2h2v15H2z" fill="#333" stroke="#fff" strokeWidth="1.800" /><rect x="4" y="5" width="4" height="11" fill="#fff" /><path d="M14 2v5M18 2v5" stroke="#fff" strokeWidth="1.500" /><path d="M12 6h8v4l-3 3v6h-2v-6l-3-3z" fill="#fff" stroke="#333" strokeWidth=".6" /></svg>
            <svg width="20" height="20" viewBox="0 0 20 20"><path d="M2 17v-4M6 17v-7M10 17V7M14 17V4M17 17V1" stroke="#78868c" strokeWidth="2.500" /><circle cx="13" cy="14" r="4" fill="#f4a818" /><path d="M13 8v12M7 14h12M9 10l8 8M17 10l-8 8" stroke="#f4a818" /></svg>
            <svg width="20" height="20" viewBox="0 0 20 20"><path d="M1 6h4l6-6v19l-6-6H1z" fill="#fff" stroke="#777" strokeWidth=".6" /><circle cx="14" cy="14" r="5" fill="#fff" stroke="#d02020" strokeWidth="2" /><path d="M10.500 10.500l7 7" stroke="#d02020" strokeWidth="2" /></svg>
          </TrayIcons>
          <Clock>00:03<br />21.02.2015</Clock>
          <ShowDesktop aria-label="Show desktop" />
        </TaskGroup>
      </Taskbar>
    </Page>
  );
}
